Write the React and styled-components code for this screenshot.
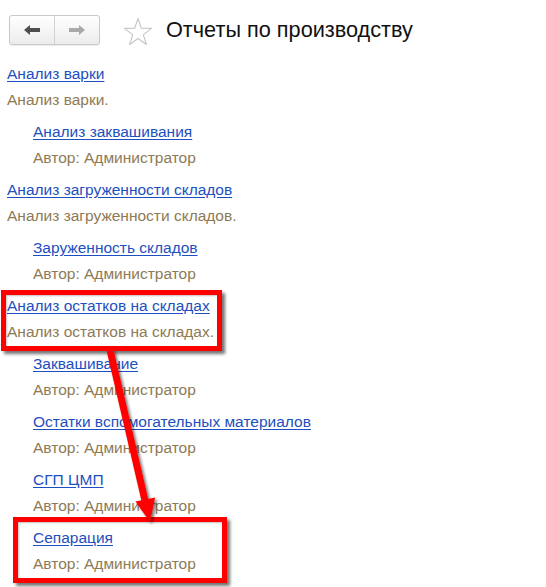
import React from 'react';
import styled, { createGlobalStyle } from 'styled-components';

const GlobalStyle = createGlobalStyle`
  html, body {
    margin: 0;
    padding: 0;
    background: #ffffff;
  }
  body {
    font-family: Arial, "Liberation Sans", sans-serif;
  }
`;

const Page = styled.div`
  position: relative;
  width: 546px;
  height: 587px;
  overflow: hidden;
  background: #ffffff;
`;

const Header = styled.div`
  display: flex;
  align-items: center;
  height: 70px;
  padding: 0 0 10px 9px;
  box-sizing: border-box;
`;

const NavGroup = styled.div`
  display: flex;
  width: 91px;
  height: 30px;
  box-sizing: border-box;
  border: 1px solid #c9c9c9;
  border-radius: 3px;
  background: linear-gradient(#ffffff, #ececec);
  box-shadow: 0 1px 1px rgba(0, 0, 0, 0.08);
`;

const NavButton = styled.div`
  flex: 1;
  display: flex;
  align-items: center;
  justify-content: center;
  border-left: ${p => (p.$divider ? '1px solid #d2d2d2' : 'none')};
`;

const StarWrap = styled.div`
  display: flex;
  margin-left: 23px;
  margin-top: 2px;
`;

const Title = styled.h1`
  margin: 0 0 0 13px;
  font-size: 21.7px;
  font-weight: normal;
  color: #111111;
`;

const ListViewport = styled.div`
  height: 517px;
  overflow: hidden;
`;

const List = styled.div`
  margin-top: -9px;
`;

const Item = styled.div`
  padding-left: ${p => (p.$sub ? '33px' : '7px')};
  margin-bottom: 6px;
`;

const ItemLink = styled.a`
  display: inline-block;
  font-size: 15.5px;
  line-height: 26px;
  color: #1d4fc0;
  text-decoration: underline;
  text-underline-offset: 2px;
`;

const ItemNote = styled.div`
  font-size: 15.5px;
  line-height: 26px;
  color: #8d7a55;
`;

const Frame = styled.div`
  position: absolute;
  box-sizing: border-box;
  border: 5px solid #ff0000;
  box-shadow: 3px 3px 3px rgba(0, 0, 0, 0.55), inset 1px 1px 2px rgba(0, 0, 0, 0.25);
`;

const Arrow = styled.svg`
  position: absolute;
  left: 0;
  top: 0;
  pointer-events: none;
  overflow: visible;
`;

const items = [
  { title: 'Анализ варки', note: 'Анализ варки.' },
  { title: 'Анализ заквашивания', note: 'Автор: Администратор', sub: true },
  { title: 'Анализ загруженности складов', note: 'Анализ загруженности складов.' },
  { title: 'Заруженность складов', note: 'Автор: Администратор', sub: true },
  { title: 'Анализ остатков на складах', note: 'Анализ остатков на складах.' },
  { title: 'Заквашивание', note: 'Автор: Администратор', sub: true },
  { title: 'Остатки вспомогательных материалов', note: 'Автор: Администратор', sub: true },
  { title: 'СГП ЦМП', note: 'Автор: Администратор', sub: true },
  { title: 'Сепарация', note: 'Автор: Администратор', sub: true },
];

const App = () => (
  <Page>
    <GlobalStyle />
    <Header>
      <NavGroup>
        <NavButton>
          <svg width="18" height="12" viewBox="0 0 18 12">
            <path d="M1 6 L7 1 L7 4 L17 4 L17 8 L7 8 L7 11 Z" fill="#4e4e4e" />
          </svg>
        </NavButton>
        <NavButton $divider>
          <svg width="18" height="12" viewBox="0 0 18 12">
            <path d="M17 6 L11 1 L11 4 L1 4 L1 8 L11 8 L11 11 Z" fill="#a9a9a9" />
          </svg>
        </NavButton>
      </NavGroup>
      <StarWrap>
        <svg width="30" height="29" viewBox="0 0 30 29">
          <path
            d="M15 1.5 L18.3 11.3 L28.6 11.4 L20.3 17.6 L23.4 27.5 L15 21.5 L6.6 27.5 L9.7 17.6 L1.4 11.4 L11.7 11.3 Z"
            fill="none"
            stroke="#c6c6c6"
            strokeWidth="1.1"
            strokeLinejoin="round"
          />
        </svg>
      </StarWrap>
      <Title>Отчеты по производству</Title>
    </Header>
    <ListViewport>
      <List>
        {items.map(it => (
          <Item key={it.title} $sub={it.sub}>
            <ItemLink href="#">{it.title}</ItemLink>
            <ItemNote>{it.note}</ItemNote>
          </Item>
        ))}
      </List>
    </ListViewport>

    <Frame style={{ left: 1, top: 290, width: 221, height: 61 }} />
    <Frame style={{ left: 13, top: 517, width: 214, height: 66 }} />
    <Arrow width="546" height="587" viewBox="0 0 546 587">
      <defs>
        <filter id="sh" x="-50%" y="-50%" width="200%" height="200%">
          <feDropShadow dx="2" dy="2" stdDeviation="1.5" floodColor="#000" floodOpacity="0.55" />
        </filter>
      </defs>
      <g filter="url(#sh)">
        <line x1="110" y1="350" x2="146" y2="505" stroke="#ff0000" strokeWidth="7" />
        <polygon points="135.5,501.6 155.1,497.4 150,522" fill="#ff0000" />
      </g>
    </Arrow>
  </Page>
);

export default App;
